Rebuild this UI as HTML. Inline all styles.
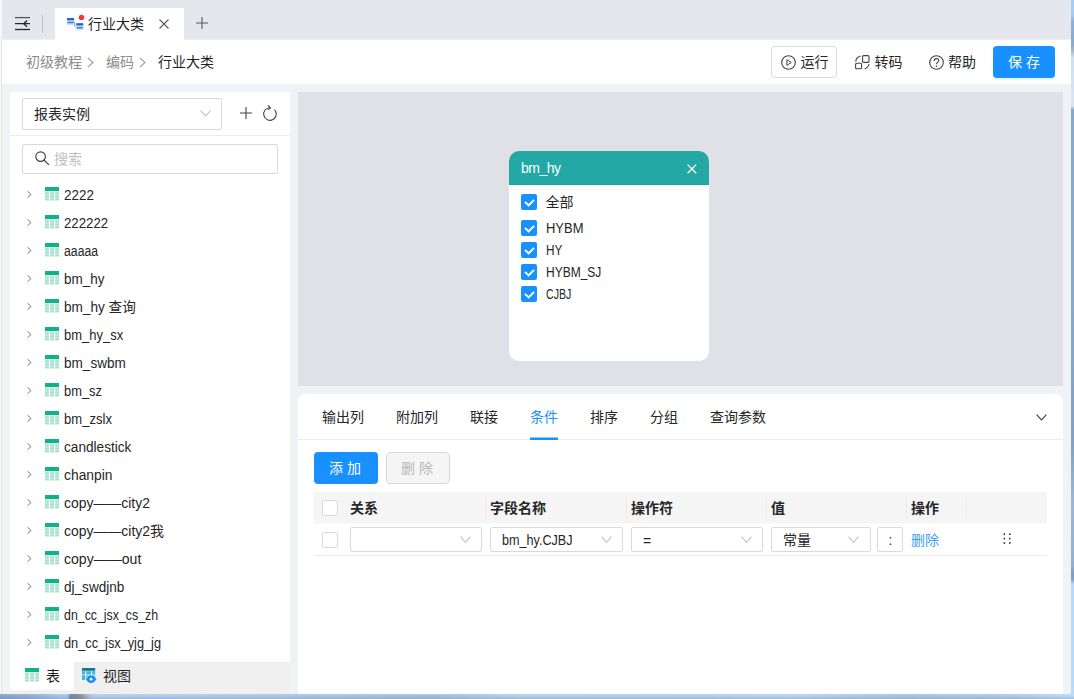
<!DOCTYPE html>
<html lang="zh-CN">
<head>
<meta charset="utf-8">
<title>行业大类</title>
<style>
*{box-sizing:border-box;margin:0;padding:0}
html,body{width:1074px;height:699px;overflow:hidden}
body{position:relative;background:#f0f2f5;font-family:"Liberation Sans","Noto Sans CJK SC",sans-serif;font-size:14px;color:#262626;line-height:1}
.abs{position:absolute}
.t{position:absolute;white-space:nowrap;line-height:20px;height:20px}
svg{position:absolute;overflow:visible}
/* window frame */
#frame-r{left:1071px;top:0;width:3px;height:699px;background:linear-gradient(180deg,#a9cdf1 0,#a9cdf1 15px,#8fb0d4 22px,#8aa9cc 44px,#a8b4c2 50px,#cfe0f2 58px,#d9e5f0 106px,#8aa6c8 110px,#8ca8c9 300px,#849fbf 440px,#8fabca 470px,#9cb6d3 500px,#95b0cf 565px,#7f9cc0 574px,#86a4ca 580px,#b9d9fa 584px,#b9d9fa 699px)}
#frame-b{left:0;top:694px;width:1074px;height:5px;background:linear-gradient(180deg,rgba(255,255,255,.12) 0,rgba(255,255,255,0) 2px,rgba(110,120,135,.28) 5px),linear-gradient(90deg,#84a3cd 0,#8fafd8 30px,#a6c5eb 62px,#a3c0e6 68px,#6d89ad 70px,#7f8794 76px,#8f959c 82px,#a5b5cb 87px,#b1cef0 94px,#abc8e8 250px,#a4bedb 430px,#b5d0ea 520px,#b3cfec 700px,#b6d4f4 790px,#a8c2de 900px,#acc8e6 1000px,#b9d9fa 1074px)}
#frame-l{left:0;top:0;width:2px;height:694px;background:linear-gradient(90deg,#fafafa 0,#fafafa 1px,#e3e3e5 1px,#e3e3e5 2px)}
#frame-l2{left:0;top:0;width:2px;height:39px;background:#f6f7fa}
/* top tab bar */
#tabbar{left:2px;top:0;width:1069px;height:40px;background:#e4e7ee;border-bottom:1px solid #f1f1f2;z-index:1}
#tab{left:55px;top:8px;width:129px;height:32px;background:#fff}
#header{left:2px;top:39px;width:1069px;height:45px;background:#fff;z-index:0}
.crumb{color:#8c8c8c}
.btn{position:absolute;height:32px;border-radius:4px}
/* left panel */
#left{left:10px;top:92px;width:280px;height:598px;background:#fff}
.box{position:absolute;border:1px solid #d9d9d9;border-radius:2px;background:#fff}
.row{position:absolute;left:0;width:280px;height:28px}
/* canvas */
#canvas{left:298px;top:92px;width:765px;height:294px;background:#e0e1e6}
#card{left:211px;top:59px;width:200px;height:210px;background:#fff;border-radius:10px;overflow:hidden}
#card .hd{left:0;top:0;width:200px;height:34px;background:#23a8a6;border-bottom:1px solid #20a09e}
.ck{position:absolute;width:16px;height:16px;background:#1890ff;border-radius:2px}
.cl,.tr{transform-origin:0 50%}
.uck{position:absolute;width:16px;height:16px;background:#fff;border:1px solid #d9d9d9;border-radius:2px}
/* bottom panel */
#bottom{left:298px;top:394px;width:765px;height:300px;background:#fff;border-radius:8px 8px 0 0}
.sel{position:absolute;height:25px;border:1px solid #d9d9d9;border-radius:2px;background:#fff}
.th{font-weight:bold;color:#262626}
.sep{position:absolute;width:1px;top:5px;height:22px;background:#ebebeb}
</style>
</head>
<body>
<div id="tabbar" class="abs">
<svg style="left:12px;top:15px" width="18" height="18" viewBox="0 0 18 18" fill="none" stroke="#262626" stroke-width="1.3"><path d="M1 2.6H16" stroke="#555"/><path d="M1 8.7H16M13 5.6L9.6 8.7L13 11.8"/><path d="M1 14.5H16"/></svg>
<div class="abs" style="left:40px;top:15px;width:1px;height:18px;background:#bcbfc6"></div>
<div id="tab" class="abs" style="left:53px">
<svg style="left:12px;top:6px" width="18" height="18" viewBox="0 0 18 18"><rect x="0" y="4" width="7" height="7" fill="#c9e0ff"/><rect x="0" y="4" width="7" height="2.3" fill="#1766d8"/><rect x="0.4" y="7.8" width="6.2" height="1.4" fill="#2f7be6"/><rect x="9.3" y="9.2" width="7" height="7" fill="#c9e0ff"/><rect x="9.3" y="9.2" width="7" height="2.3" fill="#1766d8"/><rect x="9.7" y="13" width="6.2" height="1.4" fill="#2f7be6"/><path d="M7.7 7.5V12.2H9.2" stroke="#9aa3b0" stroke-width="1" fill="none"/><circle cx="14.5" cy="3.4" r="2.7" fill="#f5333f"/></svg>
<span class="t" style="left:33px;top:6px;color:#1f1f1f">行业大类</span>
<svg style="left:104px;top:11px" width="10" height="10" viewBox="0 0 10 10" stroke="#595959" stroke-width="1.1"><path d="M0.5 0.5L9.5 9.5M9.5 0.5L0.5 9.5"/></svg>
</div>
<svg style="left:194px;top:17px" width="12" height="12" viewBox="0 0 12 12" stroke="#555" stroke-width="1.1"><path d="M6 0V12M0 6H12"/></svg>
</div>
<div id="header" class="abs">
<span class="t crumb" style="left:24px;top:13px">初级教程</span>
<svg style="left:84.5px;top:18px" width="7" height="11" viewBox="0 0 7 11" fill="none" stroke="#9a9a9a" stroke-width="1.1"><path d="M0.8 0.8L6 5.5L0.8 10.2"/></svg>
<span class="t crumb" style="left:104px;top:13px">编码</span>
<svg style="left:136.5px;top:18px" width="7" height="11" viewBox="0 0 7 11" fill="none" stroke="#9a9a9a" stroke-width="1.1"><path d="M0.8 0.8L6 5.5L0.8 10.2"/></svg>
<span class="t" style="left:156px;top:13px;color:#1f1f1f">行业大类</span>
<div class="btn" style="left:769px;top:7px;width:66px;border:1px solid #d9d9d9;background:#fff"></div>
<svg style="left:778.5px;top:15.5px" width="15" height="15" viewBox="0 0 15 15" fill="none" stroke="#434343" stroke-width="1.1"><circle cx="7.5" cy="7.5" r="6.8"/><path d="M5.9 4.7V10.3L10.3 7.5Z" stroke-width="1" stroke-linejoin="round"/></svg>
<span class="t" style="left:798.5px;top:13px">运行</span>
<svg style="left:853px;top:16px" width="15" height="15" viewBox="0 0 15 15" fill="none" stroke="#434343" stroke-width="1.1"><rect x="7.6" y="0.6" width="6.4" height="6.8" rx="1"/><rect x="0.6" y="8.2" width="6" height="5.6" rx="1"/><path d="M0.7 6.8Q1 2.4 5.6 1"/><path d="M13.9 9Q13.4 12.6 9.6 13.9"/></svg>
<span class="t" style="left:872.5px;top:13px">转码</span>
<svg style="left:926.5px;top:15.5px" width="15" height="15" viewBox="0 0 15 15" fill="none" stroke="#434343" stroke-width="1.1"><circle cx="7.5" cy="7.5" r="6.8"/><path d="M5.2 6Q5.2 3.6 7.5 3.6Q9.8 3.6 9.8 5.6Q9.8 6.8 8.4 7.5Q7.5 8 7.5 9.3" stroke-width="1.1"/><circle cx="7.5" cy="11.2" r="0.75" fill="#434343" stroke="none"/></svg>
<span class="t" style="left:946px;top:13px">帮助</span>
<div class="btn" style="left:991px;top:7px;width:62px;background:#1890ff;box-shadow:0 2px 0 rgba(24,144,255,.1)"></div>
<span class="t" style="left:1006px;top:13px;color:#fff">保 存</span>
</div>
<div id="left" class="abs">
<svg width="0" height="0" style="left:0;top:0"><defs><g id="ticon"><rect x="0" y="0" width="14" height="13.5" fill="#c9ede2"/><rect x="0" y="5.6" width="14" height="1.6" fill="#a3dfcd"/><rect x="0" y="8.6" width="14" height="1.6" fill="#a3dfcd"/><rect x="0" y="11.6" width="14" height="1.6" fill="#a3dfcd"/><rect x="3.9" y="4" width="1.2" height="9.5" fill="#fff"/><rect x="9" y="4" width="1.2" height="9.5" fill="#fff"/><rect x="0" y="0" width="14" height="4" fill="#0fb38b"/></g></defs></svg>
<div class="box" style="left:12px;top:6px;width:200px;height:32px"></div>
<span class="t" style="left:24px;top:12px">报表实例</span>
<svg style="left:189.5px;top:18px" width="11" height="7" viewBox="0 0 11 7" fill="none" stroke="#bfbfbf" stroke-width="1.1"><path d="M0.6 0.6L5.5 6L10.4 0.6"/></svg>
<svg style="left:230px;top:15px" width="12" height="12" viewBox="0 0 12 12" stroke="#434343" stroke-width="1.1"><path d="M6 0V12M0 6H12"/></svg>
<svg style="left:252px;top:13px" width="16" height="16" viewBox="0 0 16 16" fill="none" stroke="#434343" stroke-width="1.1"><path d="M12.5 4.6A6.3 6.3 0 1 1 8.2 2.7"/><path d="M5.9 0.5L8.4 2.7L6.1 4.9"/></svg>
<div class="abs" style="left:0;top:43px;width:280px;height:1px;background:#ececec"></div>
<div class="box" style="left:12px;top:52px;width:256px;height:30px"></div>
<svg style="left:24.5px;top:59px" width="15" height="15" viewBox="0 0 15 15" fill="none" stroke="#434343" stroke-width="1.15"><circle cx="5.6" cy="5.6" r="4.8"/><path d="M9 9L14 13.8"/></svg>
<span class="t" style="left:44px;top:57px;color:#bfbfbf">搜索</span>
<div class="row" style="top:89px"><svg style="left:16.8px;top:10.2px" width="5" height="7" viewBox="0 0 5 7" fill="none" stroke="#7a7a7a" stroke-width="1"><path d="M0.5 0.3L4.1 3.5L0.5 6.7"/></svg><svg style="left:35px;top:6px" width="14" height="14" viewBox="0 0 14 14"><use href="#ticon"/></svg><span class="t tr" style="left:54px;top:4px;transform:scaleX(0.958)">2222</span></div>
<div class="row" style="top:117px"><svg style="left:16.8px;top:10.2px" width="5" height="7" viewBox="0 0 5 7" fill="none" stroke="#7a7a7a" stroke-width="1"><path d="M0.5 0.3L4.1 3.5L0.5 6.7"/></svg><svg style="left:35px;top:6px" width="14" height="14" viewBox="0 0 14 14"><use href="#ticon"/></svg><span class="t tr" style="left:54px;top:4px;transform:scaleX(0.945)">222222</span></div>
<div class="row" style="top:145px"><svg style="left:16.8px;top:10.2px" width="5" height="7" viewBox="0 0 5 7" fill="none" stroke="#7a7a7a" stroke-width="1"><path d="M0.5 0.3L4.1 3.5L0.5 6.7"/></svg><svg style="left:35px;top:6px" width="14" height="14" viewBox="0 0 14 14"><use href="#ticon"/></svg><span class="t tr" style="left:54px;top:4px;transform:scaleX(0.875)">aaaaa</span></div>
<div class="row" style="top:173px"><svg style="left:16.8px;top:10.2px" width="5" height="7" viewBox="0 0 5 7" fill="none" stroke="#7a7a7a" stroke-width="1"><path d="M0.5 0.3L4.1 3.5L0.5 6.7"/></svg><svg style="left:35px;top:6px" width="14" height="14" viewBox="0 0 14 14"><use href="#ticon"/></svg><span class="t tr" style="left:54px;top:4px;transform:scaleX(0.963)">bm_hy</span></div>
<div class="row" style="top:201px"><svg style="left:16.8px;top:10.2px" width="5" height="7" viewBox="0 0 5 7" fill="none" stroke="#7a7a7a" stroke-width="1"><path d="M0.5 0.3L4.1 3.5L0.5 6.7"/></svg><svg style="left:35px;top:6px" width="14" height="14" viewBox="0 0 14 14"><use href="#ticon"/></svg><span class="t tr" style="left:54px;top:4px;transform:scaleX(0.972)">bm_hy 查询</span></div>
<div class="row" style="top:229px"><svg style="left:16.8px;top:10.2px" width="5" height="7" viewBox="0 0 5 7" fill="none" stroke="#7a7a7a" stroke-width="1"><path d="M0.5 0.3L4.1 3.5L0.5 6.7"/></svg><svg style="left:35px;top:6px" width="14" height="14" viewBox="0 0 14 14"><use href="#ticon"/></svg><span class="t tr" style="left:54px;top:4px;transform:scaleX(0.927)">bm_hy_sx</span></div>
<div class="row" style="top:257px"><svg style="left:16.8px;top:10.2px" width="5" height="7" viewBox="0 0 5 7" fill="none" stroke="#7a7a7a" stroke-width="1"><path d="M0.5 0.3L4.1 3.5L0.5 6.7"/></svg><svg style="left:35px;top:6px" width="14" height="14" viewBox="0 0 14 14"><use href="#ticon"/></svg><span class="t tr" style="left:54px;top:4px;transform:scaleX(0.969)">bm_swbm</span></div>
<div class="row" style="top:285px"><svg style="left:16.8px;top:10.2px" width="5" height="7" viewBox="0 0 5 7" fill="none" stroke="#7a7a7a" stroke-width="1"><path d="M0.5 0.3L4.1 3.5L0.5 6.7"/></svg><svg style="left:35px;top:6px" width="14" height="14" viewBox="0 0 14 14"><use href="#ticon"/></svg><span class="t tr" style="left:54px;top:4px;transform:scaleX(0.920)">bm_sz</span></div>
<div class="row" style="top:313px"><svg style="left:16.8px;top:10.2px" width="5" height="7" viewBox="0 0 5 7" fill="none" stroke="#7a7a7a" stroke-width="1"><path d="M0.5 0.3L4.1 3.5L0.5 6.7"/></svg><svg style="left:35px;top:6px" width="14" height="14" viewBox="0 0 14 14"><use href="#ticon"/></svg><span class="t tr" style="left:54px;top:4px;transform:scaleX(0.935)">bm_zslx</span></div>
<div class="row" style="top:341px"><svg style="left:16.8px;top:10.2px" width="5" height="7" viewBox="0 0 5 7" fill="none" stroke="#7a7a7a" stroke-width="1"><path d="M0.5 0.3L4.1 3.5L0.5 6.7"/></svg><svg style="left:35px;top:6px" width="14" height="14" viewBox="0 0 14 14"><use href="#ticon"/></svg><span class="t tr" style="left:54px;top:4px;transform:scaleX(0.973)">candlestick</span></div>
<div class="row" style="top:369px"><svg style="left:16.8px;top:10.2px" width="5" height="7" viewBox="0 0 5 7" fill="none" stroke="#7a7a7a" stroke-width="1"><path d="M0.5 0.3L4.1 3.5L0.5 6.7"/></svg><svg style="left:35px;top:6px" width="14" height="14" viewBox="0 0 14 14"><use href="#ticon"/></svg><span class="t tr" style="left:54px;top:4px;transform:scaleX(0.990)">chanpin</span></div>
<div class="row" style="top:397px"><svg style="left:16.8px;top:10.2px" width="5" height="7" viewBox="0 0 5 7" fill="none" stroke="#7a7a7a" stroke-width="1"><path d="M0.5 0.3L4.1 3.5L0.5 6.7"/></svg><svg style="left:35px;top:6px" width="14" height="14" viewBox="0 0 14 14"><use href="#ticon"/></svg><span class="t tr" style="left:54px;top:4px;transform:scaleX(0.995)">copy——city2</span></div>
<div class="row" style="top:425px"><svg style="left:16.8px;top:10.2px" width="5" height="7" viewBox="0 0 5 7" fill="none" stroke="#7a7a7a" stroke-width="1"><path d="M0.5 0.3L4.1 3.5L0.5 6.7"/></svg><svg style="left:35px;top:6px" width="14" height="14" viewBox="0 0 14 14"><use href="#ticon"/></svg><span class="t tr" style="left:54px;top:4px;transform:scaleX(0.996)">copy——city2我</span></div>
<div class="row" style="top:453px"><svg style="left:16.8px;top:10.2px" width="5" height="7" viewBox="0 0 5 7" fill="none" stroke="#7a7a7a" stroke-width="1"><path d="M0.5 0.3L4.1 3.5L0.5 6.7"/></svg><svg style="left:35px;top:6px" width="14" height="14" viewBox="0 0 14 14"><use href="#ticon"/></svg><span class="t tr" style="left:54px;top:4px;transform:scaleX(1.004)">copy——out</span></div>
<div class="row" style="top:481px"><svg style="left:16.8px;top:10.2px" width="5" height="7" viewBox="0 0 5 7" fill="none" stroke="#7a7a7a" stroke-width="1"><path d="M0.5 0.3L4.1 3.5L0.5 6.7"/></svg><svg style="left:35px;top:6px" width="14" height="14" viewBox="0 0 14 14"><use href="#ticon"/></svg><span class="t tr" style="left:54px;top:4px;transform:scaleX(0.970)">dj_swdjnb</span></div>
<div class="row" style="top:509px"><svg style="left:16.8px;top:10.2px" width="5" height="7" viewBox="0 0 5 7" fill="none" stroke="#7a7a7a" stroke-width="1"><path d="M0.5 0.3L4.1 3.5L0.5 6.7"/></svg><svg style="left:35px;top:6px" width="14" height="14" viewBox="0 0 14 14"><use href="#ticon"/></svg><span class="t tr" style="left:54px;top:4px;transform:scaleX(0.883)">dn_cc_jsx_cs_zh</span></div>
<div class="row" style="top:537px"><svg style="left:16.8px;top:10.2px" width="5" height="7" viewBox="0 0 5 7" fill="none" stroke="#7a7a7a" stroke-width="1"><path d="M0.5 0.3L4.1 3.5L0.5 6.7"/></svg><svg style="left:35px;top:6px" width="14" height="14" viewBox="0 0 14 14"><use href="#ticon"/></svg><span class="t tr" style="left:54px;top:4px;transform:scaleX(0.910)">dn_cc_jsx_yjg_jg</span></div>
<div class="abs" style="left:0;top:570px;width:280px;height:32px;background:#f0f0f0"></div><div class="abs" style="left:0;top:570px;width:64px;height:28px;background:#fff"></div>
<svg style="left:15px;top:576px" width="14" height="14" viewBox="0 0 14 14"><use href="#ticon"/></svg>
<span class="t" style="left:36px;top:574px;color:#1f1f1f">表</span>
<svg style="left:71.9px;top:575.8px" width="15" height="15" viewBox="0 0 15 15"><rect x="0" y="0" width="13.2" height="2.8" fill="#0f7b8e"/><rect x="0" y="3.2" width="3.2" height="3.3" fill="#3db9d9"/><rect x="4.3" y="3.2" width="4.7" height="3.3" fill="#3db9d9"/><rect x="10.1" y="3.2" width="3.1" height="3.3" fill="#3db9d9"/><rect x="0" y="7.2" width="3.2" height="4.8" fill="#3db9d9"/><rect x="4.3" y="7.2" width="4.7" height="2" fill="#3db9d9"/><rect x="10.1" y="7.2" width="3.1" height="2" fill="#3db9d9"/><path d="M3.5 11.2C5 8.6 6.6 7.3 9.1 7.3C11.6 7.3 13.2 8.6 14.7 11.2C13.2 13.8 11.6 15 9.1 15C6.6 15 5 13.8 3.5 11.2Z" fill="#1b8fef" stroke="#f0f0f0" stroke-width="0.8"/><circle cx="9.1" cy="11.2" r="3.7" fill="#1b8fef"/><circle cx="9.1" cy="11.2" r="1.35" fill="#fff"/></svg>
<span class="t" style="left:93px;top:574px;color:#1f1f1f">视图</span>
</div>
<div id="canvas" class="abs">
<div id="card" class="abs">
<div class="hd abs"></div>
<span class="t" style="left:12px;top:7px;color:#fff;letter-spacing:-0.50px" id="ctitle">bm_hy</span>
<svg style="left:177.7px;top:12.8px" width="10" height="10" viewBox="0 0 10 10" stroke="#fff" stroke-width="1.3"><path d="M0.6 0.6L9.2 9.2M9.2 0.6L0.6 9.2"/></svg>
<div class="ck" style="left:12px;top:43px"><svg style="left:0;top:0" width="16" height="16" viewBox="0 0 16 16" fill="none" stroke="#fff" stroke-width="2"><path d="M4 7.9L7.6 11.4L13.1 5.9"/></svg></div><span class="t cl" style="left:36.5px;top:41px">全部</span><div class="ck" style="left:12px;top:69px"><svg style="left:0;top:0" width="16" height="16" viewBox="0 0 16 16" fill="none" stroke="#fff" stroke-width="2"><path d="M4 7.9L7.6 11.4L13.1 5.9"/></svg></div><span class="t cl" style="left:36.5px;top:67px;transform:scaleX(0.926)">HYBM</span><div class="ck" style="left:12px;top:91px"><svg style="left:0;top:0" width="16" height="16" viewBox="0 0 16 16" fill="none" stroke="#fff" stroke-width="2"><path d="M4 7.9L7.6 11.4L13.1 5.9"/></svg></div><span class="t cl" style="left:36.5px;top:89px;transform:scaleX(0.842)">HY</span><div class="ck" style="left:12px;top:113px"><svg style="left:0;top:0" width="16" height="16" viewBox="0 0 16 16" fill="none" stroke="#fff" stroke-width="2"><path d="M4 7.9L7.6 11.4L13.1 5.9"/></svg></div><span class="t cl" style="left:36.5px;top:111px;transform:scaleX(0.857)">HYBM_SJ</span><div class="ck" style="left:12px;top:135px"><svg style="left:0;top:0" width="16" height="16" viewBox="0 0 16 16" fill="none" stroke="#fff" stroke-width="2"><path d="M4 7.9L7.6 11.4L13.1 5.9"/></svg></div><span class="t cl" style="left:36.5px;top:133px;transform:scaleX(0.756)">CJBJ</span>
</div>
</div>
<div id="bottom" class="abs">
<span class="t" style="left:24px;top:13px;">输出列</span><span class="t" style="left:98px;top:13px;">附加列</span><span class="t" style="left:172px;top:13px;">联接</span><span class="t" style="left:232px;top:13px;color:#1890ff">条件</span><span class="t" style="left:292px;top:13px;">排序</span><span class="t" style="left:352px;top:13px;">分组</span><span class="t" style="left:412px;top:13px;">查询参数</span>
<div class="abs" style="left:0;top:45px;width:765px;height:1px;background:#ececec"></div>
<div class="abs" style="left:232px;top:43px;width:28px;height:1px;background:#1890ff;opacity:.5"></div><div class="abs" style="left:232px;top:44px;width:28px;height:2px;background:#1890ff;z-index:2"></div>
<svg style="left:737.5px;top:19.5px" width="11" height="7" viewBox="0 0 11 7" fill="none" stroke="#434343" stroke-width="1.2"><path d="M0.6 0.6L5.5 5.8L10.4 0.6"/></svg>
<div class="btn" style="left:16px;top:58px;width:64px;background:#1890ff"></div>
<span class="t" style="left:31px;top:64px;color:#fff">添 加</span>
<div class="btn" style="left:88px;top:58px;width:64px;background:#f5f5f5;border:1px solid #d9d9d9"></div>
<span class="t" style="left:103px;top:64px;color:#b8b8b8">删 除</span>
<div class="abs" id="thead" style="left:16px;top:98px;width:733px;height:31px;background:#f5f5f5">
<div class="uck" style="left:8px;top:8px"></div>
<span class="t th" style="left:36px;top:6px">关系</span>
<span class="t th" style="left:176px;top:6px">字段名称</span>
<span class="t th" style="left:317px;top:6px">操作符</span>
<span class="t th" style="left:457px;top:6px">值</span>
<span class="t th" style="left:597px;top:6px">操作</span>
<div class="sep" style="left:171px"></div><div class="sep" style="left:312px"></div><div class="sep" style="left:452px"></div><div class="sep" style="left:592px"></div><div class="sep" style="left:652px"></div>
</div>
<div class="abs" style="left:16px;top:129px;width:733px;height:1px;background:#fafafa"></div>
<div class="abs" id="trow" style="left:16px;top:129px;width:733px;height:33px;border-bottom:1px solid #ececec">
<div class="uck" style="left:8px;top:9px"></div>
<div class="sel" style="left:36px;top:4px;width:132px"></div>
<div class="sel" style="left:176px;top:4px;width:133px"></div>
<div class="sel" style="left:317px;top:4px;width:132px"></div>
<div class="sel" style="left:457px;top:4px;width:100px"></div>
<div class="sel" style="left:563px;top:4px;width:26px"></div>
<span class="t" style="left:188px;top:7px;transform-origin:0 50%;transform:scaleX(0.9)" id="fld">bm_hy.CJBJ</span>
<span class="t" style="left:329px;top:8px">=</span>
<span class="t" style="left:469px;top:7px">常量</span>
<span class="t" style="left:574.5px;top:7px">:</span>
<span class="t" style="left:597px;top:7px;color:#3c9dff">删除</span>
<svg style="left:145.5px;top:13px" width="11" height="8" viewBox="0 0 11 8" fill="none" stroke="#bfbfbf" stroke-width="1.1"><path d="M0.6 0.6L5.5 6.5L10.4 0.6"/></svg>
<svg style="left:286.5px;top:13px" width="11" height="8" viewBox="0 0 11 8" fill="none" stroke="#bfbfbf" stroke-width="1.1"><path d="M0.6 0.6L5.5 6.5L10.4 0.6"/></svg>
<svg style="left:426.5px;top:13px" width="11" height="8" viewBox="0 0 11 8" fill="none" stroke="#bfbfbf" stroke-width="1.1"><path d="M0.6 0.6L5.5 6.5L10.4 0.6"/></svg>
<svg style="left:534px;top:13px" width="11" height="8" viewBox="0 0 11 8" fill="none" stroke="#bfbfbf" stroke-width="1.1"><path d="M0.6 0.6L5.5 6.5L10.4 0.6"/></svg>
<svg style="left:689px;top:10px" width="9" height="12" viewBox="0 0 9 12" fill="#262626"><rect x="0.6" y="0.4" width="1.5" height="1.6"/><rect x="6" y="0.4" width="1.5" height="1.6"/><rect x="0.6" y="4.8" width="1.5" height="1.6"/><rect x="6" y="4.8" width="1.5" height="1.6"/><rect x="0.6" y="9.2" width="1.5" height="1.6"/><rect x="6" y="9.2" width="1.5" height="1.6"/></svg>
</div>
</div>
<div id="frame-l" class="abs"></div><div id="frame-l2" class="abs"></div>
<div id="frame-r" class="abs"></div>
<div id="frame-b" class="abs"></div>
</body>
</html>
